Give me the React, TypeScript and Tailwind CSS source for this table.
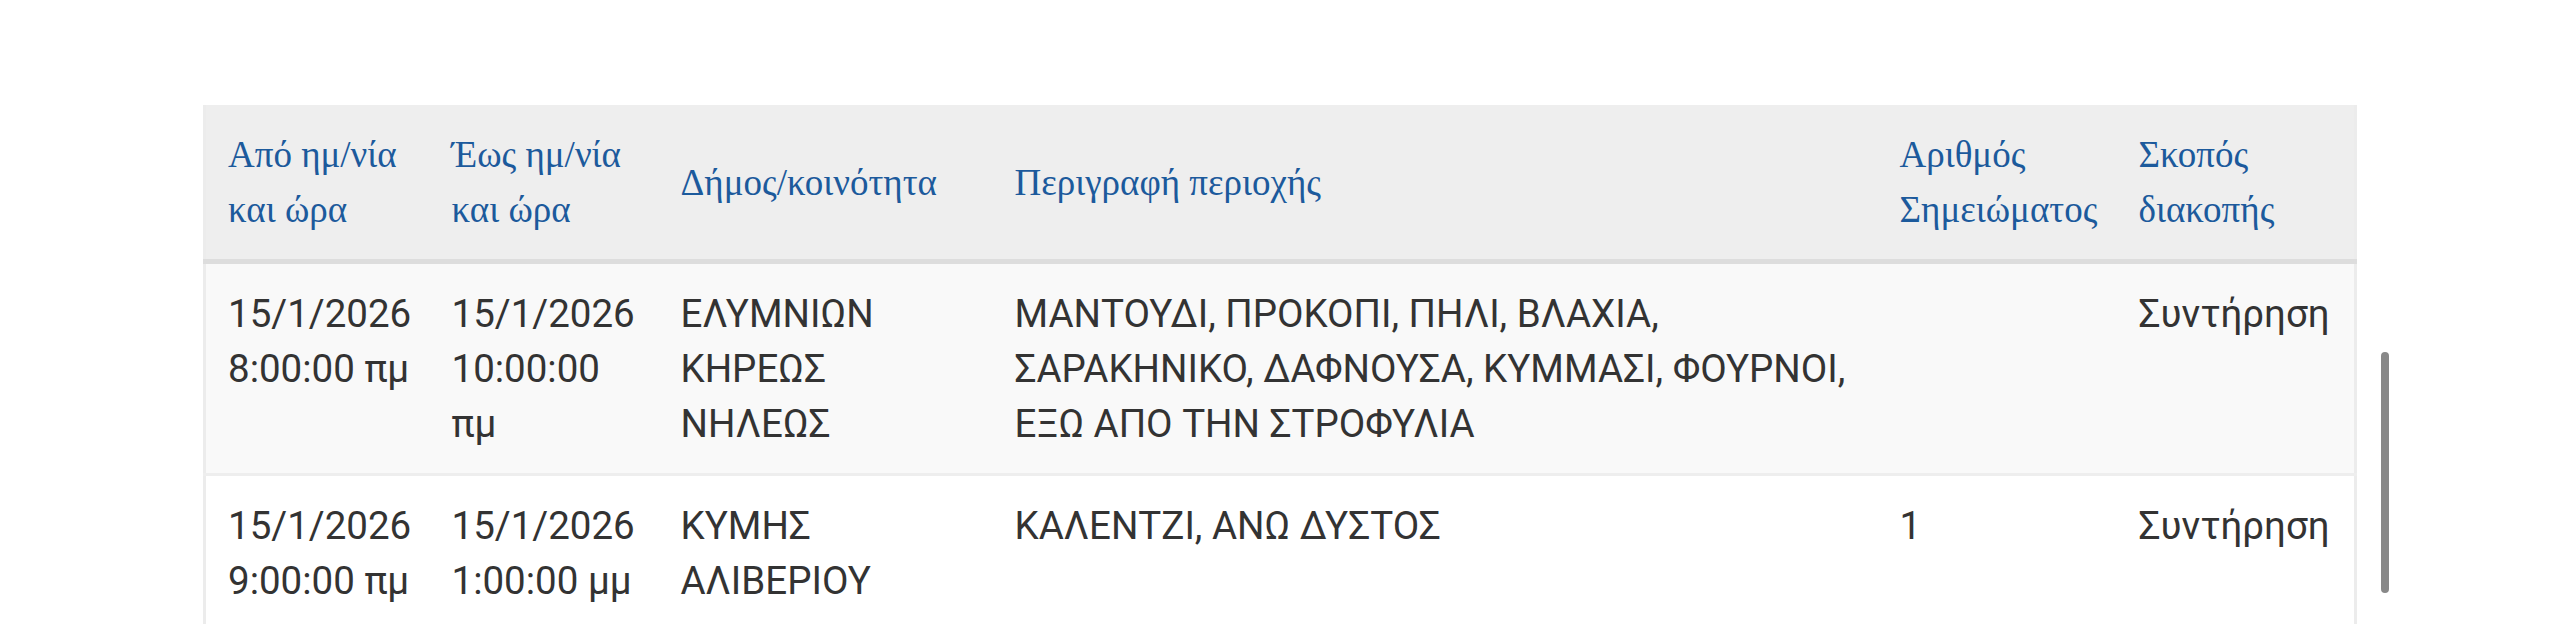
import React from "react";

type Row = {
  from: string[];
  to: string[];
  municipality: string[];
  area: string;
  note: string;
  purpose: string;
};

const rows: Row[] = [
  {
    from: ["15/1/2026", "8:00:00 πμ"],
    to: ["15/1/2026", "10:00:00 πμ"],
    municipality: ["ΕΛΥΜΝΙΩΝ", "ΚΗΡΕΩΣ", "ΝΗΛΕΩΣ"],
    area: "ΜΑΝΤΟΥΔΙ, ΠΡΟΚΟΠΙ, ΠΗΛΙ, ΒΛΑΧΙΑ, ΣΑΡΑΚΗΝΙΚΟ, ΔΑΦΝΟΥΣΑ, ΚΥΜΜΑΣΙ, ΦΟΥΡΝΟΙ, ΕΞΩ ΑΠΟ ΤΗΝ ΣΤΡΟΦΥΛΙΑ",
    note: "",
    purpose: "Συντήρηση",
  },
  {
    from: ["15/1/2026", "9:00:00 πμ"],
    to: ["15/1/2026", "1:00:00 μμ"],
    municipality: ["ΚΥΜΗΣ", "ΑΛΙΒΕΡΙΟΥ"],
    area: "ΚΑΛΕΝΤΖΙ, ΑΝΩ ΔΥΣΤΟΣ",
    note: "1",
    purpose: "Συντήρηση",
  },
];

const headers: string[][] = [
  ["Από ημ/νία", "και ώρα"],
  ["Έως ημ/νία", "και ώρα"],
  ["Δήμος/κοινότητα"],
  ["Περιγραφή περιοχής"],
  ["Αριθμός", "Σημειώματος"],
  ["Σκοπός", "διακοπής"],
];

export default function App() {
  return (
    <div className="relative min-h-[624px] w-full overflow-hidden bg-white">
      <div className="pl-[203px] pt-[105px]">
        <table
          className="w-[2154px] table-fixed border-collapse border-x-[3px] border-[#ececec] text-[38.5px] leading-[55px] text-[#333333]"
          style={{ fontFamily: "Roboto, 'Noto Sans', sans-serif" }}
        >
          <colgroup>
            <col className="w-[225px]" />
            <col className="w-[229px]" />
            <col className="w-[334px]" />
            <col className="w-[885px]" />
            <col className="w-[239px]" />
            <col />
          </colgroup>
          <thead className="bg-[#eeeeee]">
            <tr>
              {headers.map((h, i) => (
                <th
                  key={i}
                  className="border-b-[5px] border-[#dddddd] p-[22px] text-left align-middle text-[37px] font-normal text-[#1c5a9c]"
                  style={{ fontFamily: "'Liberation Serif', 'Times New Roman', serif" }}
                >
                  {h.map((line, j) => (
                    <div key={j} className="whitespace-nowrap">
                      {line}
                    </div>
                  ))}
                </th>
              ))}
            </tr>
          </thead>
          <tbody>
            {rows.map((r, i) => (
              <tr
                key={i}
                className={
                  i % 2 === 0
                    ? "border-b-[3px] border-[#eeeeee] bg-[#f9f9f9]"
                    : "bg-white"
                }
              >
                <td className="py-[22px] pl-[22px] pr-[8px] align-top">
                  {r.from.map((l, j) => (
                    <div key={j} className="whitespace-nowrap">
                      {l}
                    </div>
                  ))}
                </td>
                <td className="p-[22px] align-top">{r.to.join(" ")}</td>
                <td className="p-[22px] align-top">{r.municipality.join(" ")}</td>
                <td className="p-[22px] align-top">{r.area}</td>
                <td className="p-[22px] align-top">{r.note}</td>
                <td className="p-[22px] align-top">{r.purpose}</td>
              </tr>
            ))}
          </tbody>
        </table>
      </div>
      <div className="absolute left-[2381px] top-[352px] h-[241px] w-[8px] rounded-full bg-[#888888]" />
    </div>
  );
}
